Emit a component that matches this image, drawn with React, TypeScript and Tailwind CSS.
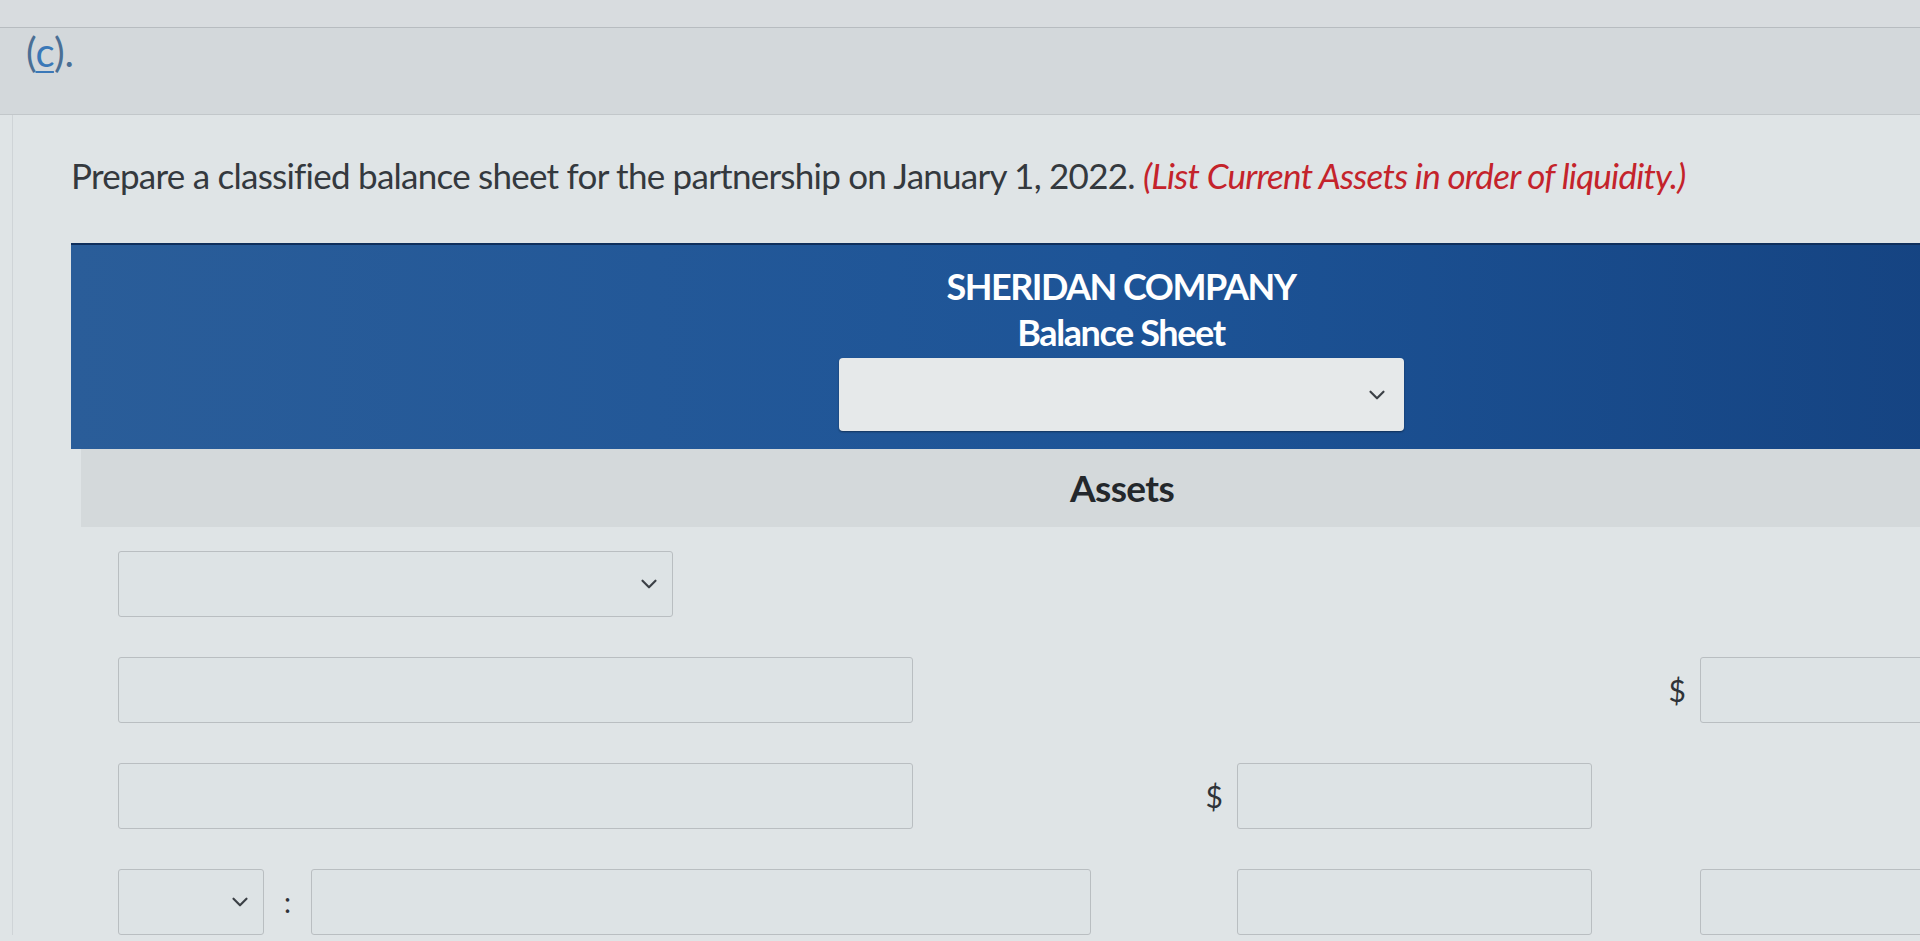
import { ChevronDown } from "lucide-react";

function Box({ className = "" }: { className?: string }) {
  return (
    <div
      className={`h-[66px] rounded-[3px] border border-[#b9bec1] bg-[#dde3e5] ${className}`}
    />
  );
}

function Select({ className = "" }: { className?: string }) {
  return (
    <div
      className={`flex h-[66px] items-center justify-end rounded-[3px] border border-[#b9bec1] bg-[#dde3e5] pr-[10px] ${className}`}
    >
      <ChevronDown size={26} strokeWidth={2} className="text-[#3b4046]" />
    </div>
  );
}

function Dollar() {
  return <span className="text-[30px] leading-none text-[#2f3338]">$</span>;
}

export default function App() {
  return (
    <div className="h-[941px] w-full overflow-hidden bg-[#dfe4e6] font-['Lato','Noto_Sans',sans-serif] text-[#34393e]">
      <div className="h-[28px] border-b border-[#b7bcc0] bg-[#d8dcdf]" />
      <div className="h-[87px] border-b border-[#c2c7ca] bg-[#d3d8db] pl-[26px] pt-[4px]">
        <span className="text-[40px] leading-none text-[#4a6f95]">
          (<span className="text-[#3a78b8] underline decoration-2 underline-offset-4">c</span>).
        </span>
      </div>

      <div className="ml-[12px] border-l border-[#cfd4d7] pt-[40px]">
        <p className="pl-[58px] text-[35px] leading-[40px] tracking-[-0.75px]">
          Prepare a classified balance sheet for the partnership on January 1, 2022.{" "}
          <span className="italic text-[#c4232b]">
            (List Current Assets in order of liquidity.)
          </span>
        </p>

        <div className="ml-[58px] mt-[48px] w-[2100px]">
          <div className="flex h-[206px] flex-col items-center border-t-2 border-[#0f2f5c] bg-gradient-to-r from-[#2a5d99] via-[#1d5497] to-[#133f7c] pt-[20px]">
            <div className="text-[36px] font-bold leading-[42px] tracking-[-1.5px] text-white">
              SHERIDAN COMPANY
            </div>
            <div className="mt-[4px] text-[36px] font-bold leading-[42px] tracking-[-1.4px] text-white">
              Balance Sheet
            </div>
            <div className="mt-[5px] flex h-[73px] w-[565px] items-center justify-end rounded-[4px] bg-[#e6e9ea] pr-[14px] shadow-[0_1px_2px_rgba(0,0,0,0.4)]">
              <ChevronDown size={26} strokeWidth={2} className="text-[#3b4046]" />
            </div>
          </div>
          <div className="ml-[10px] flex h-[78px] items-center justify-center bg-[#d4d9db] pr-[8px]">
            <span className="text-[37px] font-bold tracking-[-0.6px] text-[#24282c]">Assets</span>
          </div>
        </div>

        <div className="ml-[105px] mt-[24px] flex flex-col gap-[40px]">
          <div className="grid grid-cols-[1062px_412px_468px] items-center">
            <Select className="w-[555px]" />
            <div />
            <div />
          </div>

          <div className="grid grid-cols-[1062px_412px_468px] items-center">
            <Box className="w-[795px]" />
            <div />
            <div className="flex items-center justify-end gap-[14px]">
              <Dollar />
              <Box className="w-[360px]" />
            </div>
          </div>

          <div className="grid grid-cols-[1062px_412px_468px] items-center">
            <Box className="w-[795px]" />
            <div className="flex items-center justify-end gap-[14px]">
              <Dollar />
              <Box className="w-[355px]" />
            </div>
            <div />
          </div>

          <div className="grid grid-cols-[1062px_412px_468px] items-center">
            <div className="flex items-center">
              <Select className="w-[146px]" />
              <span className="mx-[20px] text-[28px] leading-none text-[#2f3338]">:</span>
              <Box className="w-[780px]" />
            </div>
            <div className="flex justify-end">
              <Box className="w-[355px]" />
            </div>
            <div className="flex justify-end">
              <Box className="w-[360px]" />
            </div>
          </div>
        </div>
      </div>
    </div>
  );
}
